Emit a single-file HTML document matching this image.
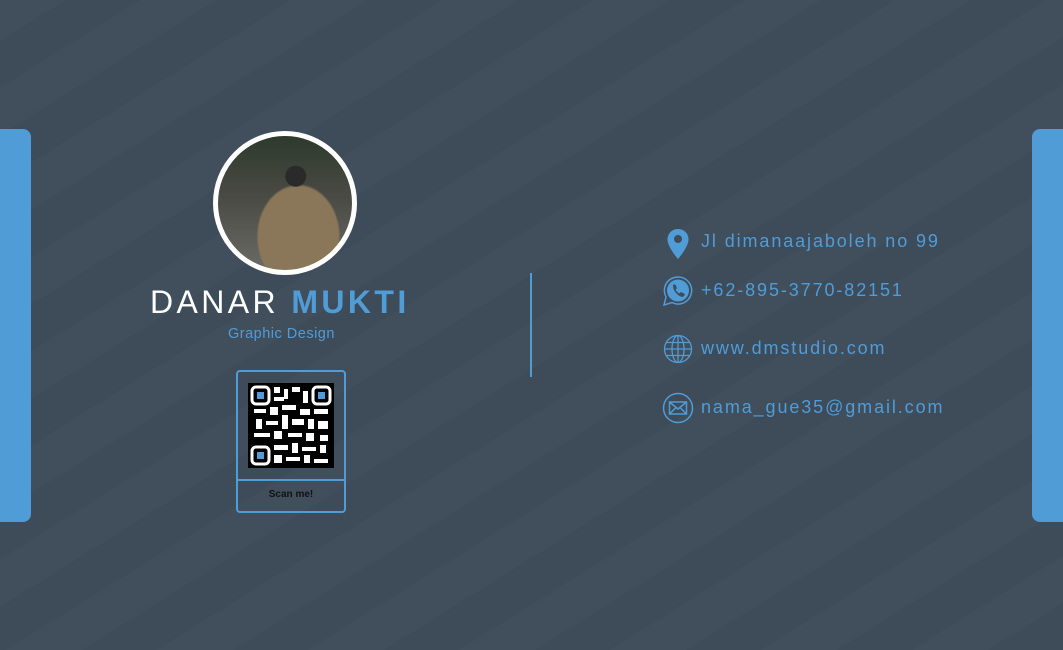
<!DOCTYPE html>
<html><head><style>
*{margin:0;padding:0;box-sizing:border-box}
body{width:1063px;height:650px;overflow:hidden;position:relative;font-family:"Liberation Sans",sans-serif;
background:repeating-linear-gradient(-32deg,#3e4b59 0px,#3e4b59 40px,#414f5d 40px,#414f5d 80px);}
.bar{position:absolute;top:129px;height:393px;width:31px;background:#4f9cd7}
.l{left:0;border-radius:0 8px 8px 0}
.r{left:1032px;border-radius:8px 0 0 8px}
.photo{position:absolute;left:213px;top:131px;width:144px;height:144px;border-radius:50%;border:5px solid #fff;
background:radial-gradient(circle at 58% 30%,#2a2a2a 0 10px,transparent 11px),radial-gradient(ellipse at 60% 75%,#8a7658 0 40px,transparent 42px),linear-gradient(180deg,#2d3a2c 0%,#4a4a44 45%,#6b6b66 100%);overflow:hidden}
.name{position:absolute;left:150px;top:284px;font-size:32px;color:#fff;letter-spacing:3.4px;white-space:nowrap}
.name b{color:#4f9cd7}
.role{position:absolute;left:228px;top:326px;font-size:14.5px;color:#4f9cd7;letter-spacing:.5px}
.qr{position:absolute;left:236px;top:370px;width:110px;height:143px;border:2px solid #4f9cd7;border-radius:4px}
.qr .sq{position:absolute;left:10px;top:11px;width:86px;height:85px;background:#000}
.qr .div{position:absolute;left:0;right:0;top:107px;border-top:2px solid #4f9cd7}
.qr .t{position:absolute;left:0;right:0;top:117px;text-align:center;font-size:10px;font-weight:bold;color:#111}
.vl{position:absolute;left:530px;top:273px;width:2px;height:104px;background:#4f9cd7}
.c{position:absolute;left:701px;font-size:18px;color:#4f9cd7;letter-spacing:1.9px;white-space:nowrap}
.ic{position:absolute}
</style></head><body>
<div class="bar l"></div><div class="bar r"></div>
<div class="photo"></div>
<div class="name">DANAR <b>MUKTI</b></div>
<div class="role">Graphic Design</div>
<div class="qr"><div class="sq">
<svg width="86" height="85" viewBox="0 0 86 85">
<g fill="none" stroke="#fff" stroke-width="3"><rect x="4" y="4" width="17" height="17" rx="4"/><rect x="65" y="4" width="17" height="17" rx="4"/><rect x="4" y="64" width="17" height="17" rx="4"/></g>
<g fill="#4f9cd7"><rect x="9" y="9" width="7" height="7"/><rect x="70" y="9" width="7" height="7"/><rect x="9" y="69" width="7" height="7"/></g>
<g fill="#fff"><rect x="26" y="4" width="6" height="6"/><rect x="36" y="6" width="4" height="10"/><rect x="44" y="4" width="8" height="5"/><rect x="55" y="8" width="5" height="12"/><rect x="26" y="14" width="10" height="4"/><rect x="6" y="26" width="12" height="4"/><rect x="22" y="24" width="8" height="8"/><rect x="34" y="22" width="14" height="5"/><rect x="52" y="26" width="10" height="6"/><rect x="66" y="26" width="14" height="5"/><rect x="8" y="36" width="6" height="10"/><rect x="18" y="38" width="12" height="4"/><rect x="34" y="32" width="6" height="14"/><rect x="44" y="36" width="12" height="6"/><rect x="60" y="36" width="6" height="10"/><rect x="70" y="38" width="10" height="8"/><rect x="6" y="50" width="16" height="4"/><rect x="26" y="48" width="8" height="8"/><rect x="40" y="50" width="14" height="4"/><rect x="58" y="50" width="8" height="8"/><rect x="72" y="52" width="8" height="6"/><rect x="26" y="62" width="14" height="5"/><rect x="44" y="60" width="6" height="10"/><rect x="54" y="64" width="14" height="4"/><rect x="72" y="62" width="6" height="8"/><rect x="26" y="72" width="8" height="8"/><rect x="38" y="74" width="14" height="4"/><rect x="56" y="72" width="6" height="8"/><rect x="66" y="76" width="14" height="4"/></g>
</svg></div><div class="div"></div><div class="t">Scan me!</div></div>
<div class="vl"></div>
<svg class="ic" style="left:666px;top:228px" width="24" height="32" viewBox="0 0 24 32"><path d="M12 1C6 1 1.5 5.5 1.5 11.5 1.5 19 12 31 12 31S22.5 19 22.5 11.5C22.5 5.5 18 1 12 1z" fill="#4f9cd7"/><circle cx="12" cy="11" r="4" fill="#3f4c5a"/></svg>
<div class="c" style="top:231px">Jl dimanaajaboleh no 99</div>
<svg class="ic" style="left:662px;top:275px" width="32" height="32" viewBox="0 0 32 32"><path d="M16 2A13.5 13.5 0 0 0 4 22L2 30 10 27.5A13.5 13.5 0 1 0 16 2z" fill="none" stroke="#4f9cd7" stroke-width="1.5"/><circle cx="16" cy="15.5" r="11" fill="#4f9cd7"/><path d="M11 10c1-1 2-1 2.5 0l1.2 2.5c.3.6 0 1-.5 1.5l-.6.6c.8 1.8 2 3 3.8 3.8l.6-.6c.5-.5 1-.8 1.5-.5L22 18.5c1 .5 1 1.5 0 2.5-1.5 1.5-4 1-7-2s-4-5.5-4-9z" fill="#3f4c5a"/></svg>
<div class="c" style="top:280px">+62-895-3770-82151</div>
<svg class="ic" style="left:663px;top:334px" width="30" height="30" viewBox="0 0 30 30" fill="none" stroke="#4f9cd7" stroke-width="1.3"><circle cx="15" cy="15" r="13.5"/><ellipse cx="15" cy="15" rx="6" ry="13.5"/><path d="M15 1.5v27M1.5 15h27M3.5 8.5h23M3.5 21.5h23"/></svg>
<div class="c" style="top:338px">www.dmstudio.com</div>
<svg class="ic" style="left:662px;top:392px" width="32" height="32" viewBox="0 0 32 32" fill="none" stroke="#4f9cd7" stroke-width="1.5"><circle cx="16" cy="16" r="14.5"/><rect x="7.5" y="10" width="17" height="12"/><path d="M7.5 10l8.5 7 8.5-7M7.5 22l6-6M24.5 22l-6-6"/></svg>
<div class="c" style="top:397px">nama_gue35@gmail.com</div>
</body></html>
